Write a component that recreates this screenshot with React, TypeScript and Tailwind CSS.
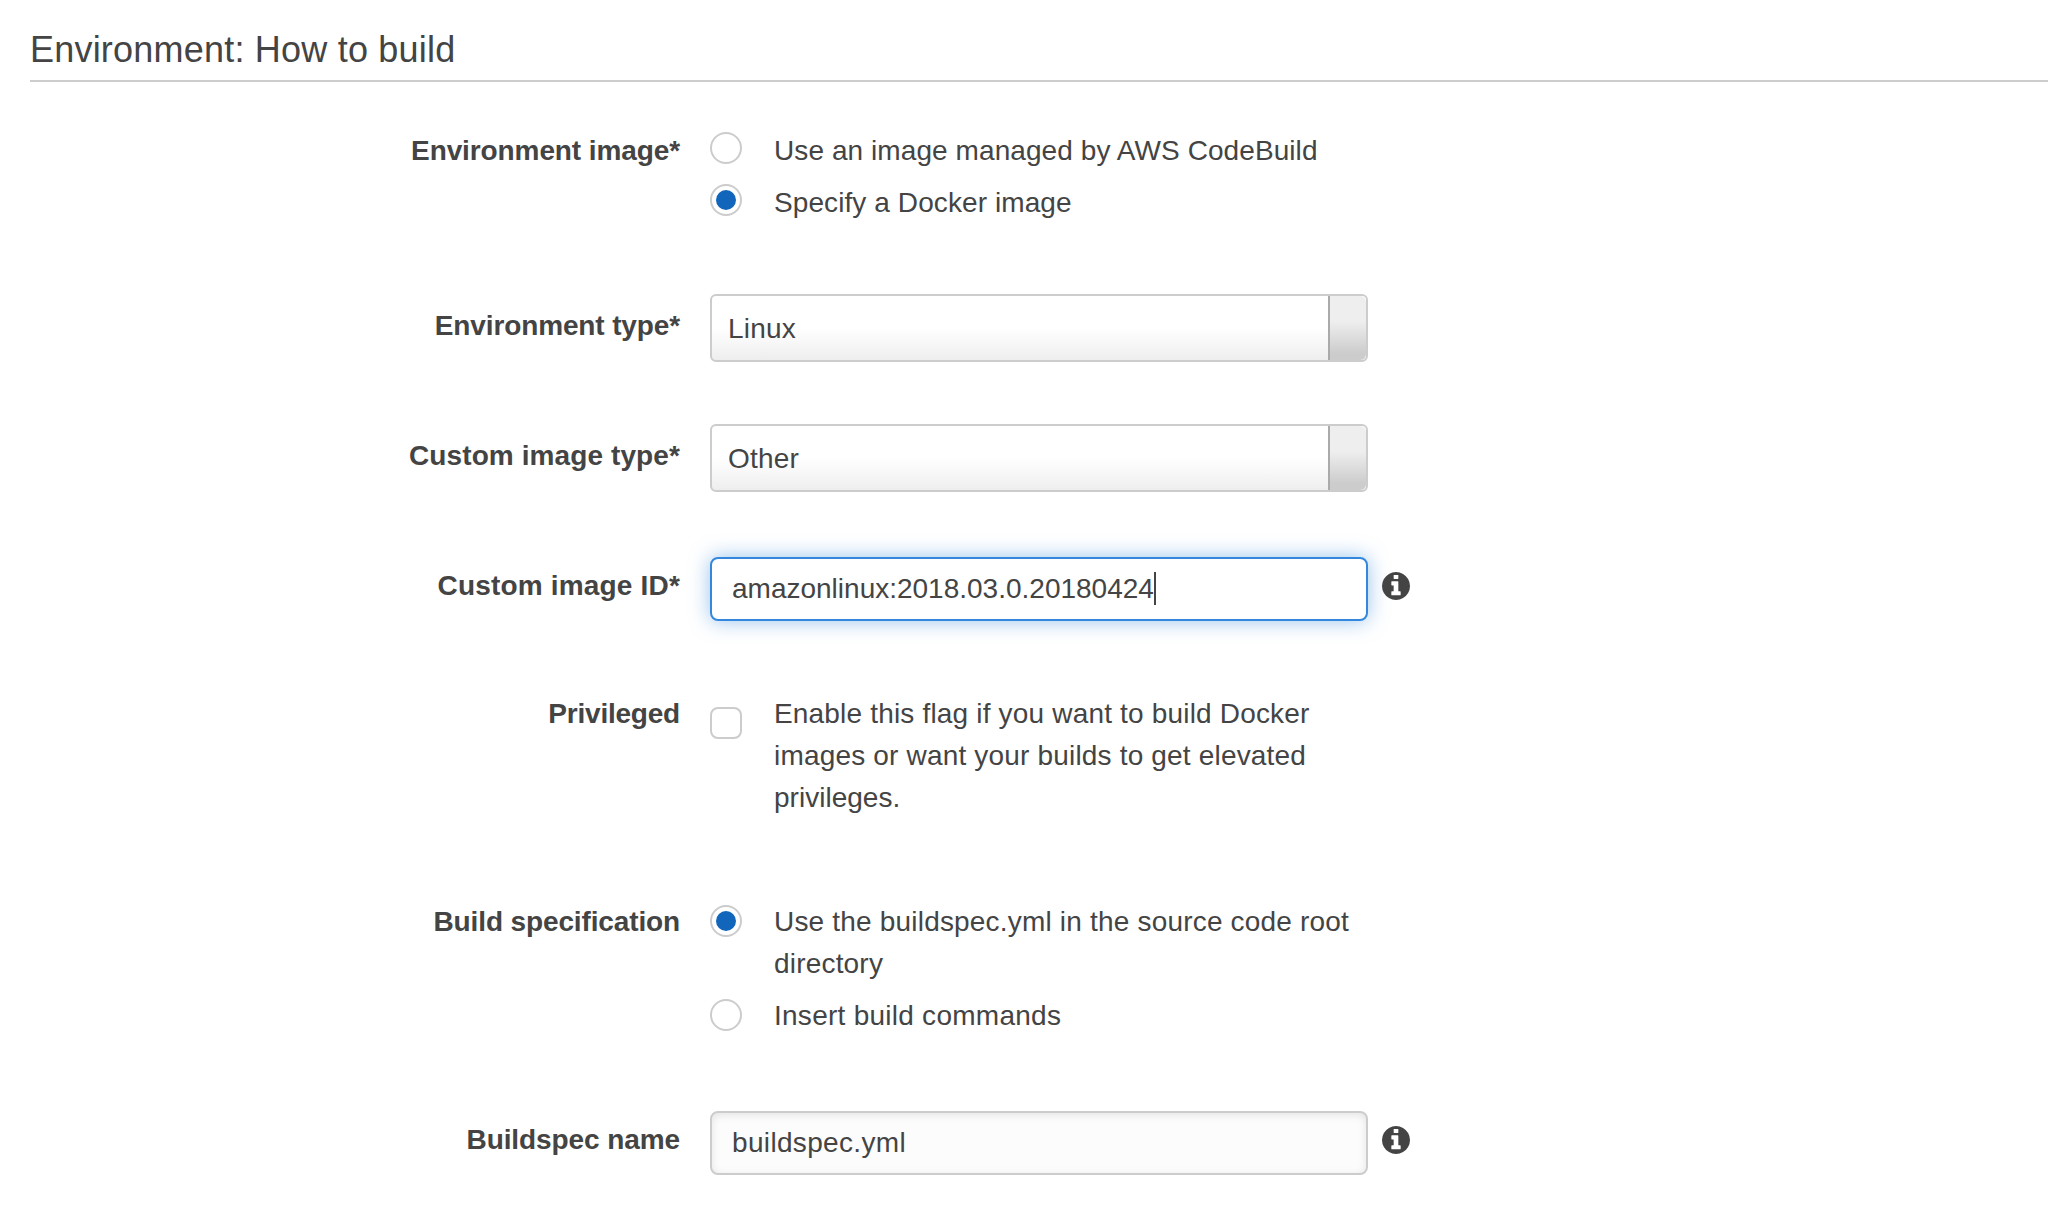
import type { ReactNode } from "react";

function Row({ label, labelClass, className, children }: { label: string; labelClass: string; className: string; children: ReactNode }) {
  return (
    <div className={`flex items-start ${className}`}>
      <div className={`w-[680px] shrink-0 text-right font-bold whitespace-nowrap ${labelClass}`}>{label}</div>
      <div className="ml-[30px] flex items-start">{children}</div>
    </div>
  );
}

function Radio({ checked }: { checked?: boolean }) {
  return (
    <span
      role="radio"
      aria-checked={!!checked}
      className="flex size-8 shrink-0 items-center justify-center rounded-full border-2 border-[#ccc] bg-white"
    >
      {checked && <span className="size-5 rounded-full bg-[#1166bb]" />}
    </span>
  );
}

function Select({ value }: { value: string }) {
  return (
    <div className="flex h-[68px] w-[658px] rounded-[6px] border-2 border-[#ccc] bg-linear-to-b from-white from-50% to-[#eee]">
      <div className="flex-1 pt-[12px] pl-4 tracking-[0.2px]">{value}</div>
      <div className="w-[38px] rounded-r-[6px] border-l-2 border-[#aaa] bg-linear-to-b from-[#eee] from-40% to-[#ccc] to-90%" />
    </div>
  );
}

function InfoIcon() {
  return (
    <svg viewBox="0 0 1536 1536" className="mt-[15px] ml-[14px] size-7 shrink-0" fill="#444">
      <path d="M1024 1248v-160q0-14-9-23t-23-9h-96v-512q0-14-9-23t-23-9h-320q-14 0-23 9t-9 23v160q0 14 9 23t23 9h96v320h-96q-14 0-23 9t-9 23v160q0 14 9 23t23 9h448q14 0 23-9t9-23zM896 352v-160q0-14-9-23t-23-9h-192q-14 0-23 9t-9 23v160q0 14 9 23t23 9h192q14 0 23-9t9-23zM1536 768q0 209-103 385.500t-279.500 279.500t-385.500 103t-385.500-103t-279.500-279.500t-103-385.500t103-385.500t279.500-279.500t385.500-103t385.500 103t279.500 279.500t103 385.500z" />
    </svg>
  );
}

export default function App() {
  return (
    <div className="h-[1228px] w-full overflow-hidden bg-white font-['Liberation_Sans',Arial,sans-serif] text-[28px] leading-[42px] text-[#444]">
      <h1 className="mr-1.5 ml-[30px] h-[82px] border-b-2 border-[#ccc] pt-[26px] text-[36px] leading-[48px] font-normal tracking-[0.21px]">
        Environment: How to build
      </h1>

      <Row label="Environment image*" labelClass="tracking-[-0.1px]" className="mt-[48px]">
        <div className="flex flex-col gap-[10px] whitespace-nowrap">
          <div className="flex items-start gap-8">
            <span className="mt-[2px]"><Radio /></span>
            <span className="tracking-[0.08px]">Use an image managed by AWS CodeBuild</span>
          </div>
          <div className="flex items-start gap-8">
            <span className="mt-[2px]"><Radio checked /></span>
            <span className="tracking-[0.09px]">Specify a Docker image</span>
          </div>
        </div>
      </Row>

      <Row label="Environment type*" labelClass="mt-[11px] tracking-[-0.13px]" className="mt-[70px]">
        <Select value="Linux" />
      </Row>

      <Row label="Custom image type*" labelClass="mt-[11px] tracking-[0.1px]" className="mt-[62px]">
        <Select value="Other" />
      </Row>

      <Row label="Custom image ID*" labelClass="mt-[8px] tracking-[0.18px]" className="mt-[65px]">
        <div className="flex h-16 w-[658px] rounded-[8px] border-2 border-[#3388dd] bg-white pl-5 shadow-[0_0_20px_rgba(51,136,221,0.5)]">
          <span className="mt-[9px]">amazonlinux:2018.03.0.20180424</span>
          <span className="mt-[13px] h-[33px] w-0.5 bg-[#444]" />
        </div>
        <InfoIcon />
      </Row>

      <Row label="Privileged" labelClass="tracking-[-0.22px]" className="mt-[72px]">
        <span role="checkbox" aria-checked="false" className="mt-[14px] mr-8 size-8 shrink-0 rounded-[8px] border-2 border-[#ccc] bg-white" />
        <div className="tracking-[0.18px] whitespace-nowrap">
          Enable this flag if you want to build Docker
          <br />
          images or want your builds to get elevated
          <br />
          <span className="tracking-[0.02px]">privileges.</span>
        </div>
      </Row>

      <Row label="Build specification" labelClass="tracking-[-0.13px]" className="mt-[82px]">
        <div className="flex flex-col gap-[10px] whitespace-nowrap">
          <div className="flex items-start gap-8">
            <span className="mt-[4px]"><Radio checked /></span>
            <span className="tracking-[0.19px]">
              Use the buildspec.yml in the source code root
              <br />
              directory
            </span>
          </div>
          <div className="flex items-start gap-8">
            <span className="mt-[4px]"><Radio /></span>
            <span className="tracking-[0.26px]">Insert build commands</span>
          </div>
        </div>
      </Row>

      <Row label="Buildspec name" labelClass="mt-[8px] tracking-[-0.09px]" className="mt-[74px]">
        <div className="h-16 w-[658px] rounded-[8px] border-2 border-[#ccc] bg-[#fcfcfc] pt-[9px] pl-5 tracking-[0.34px] shadow-[inset_0_2px_8px_rgba(0,0,0,0.1)]">
          buildspec.yml
        </div>
        <InfoIcon />
      </Row>
    </div>
  );
}
